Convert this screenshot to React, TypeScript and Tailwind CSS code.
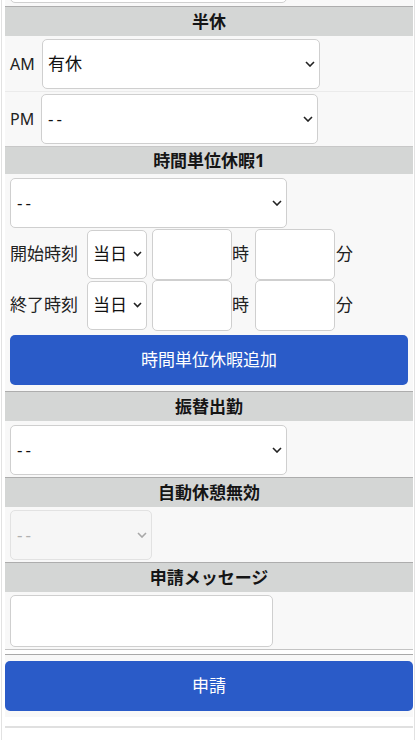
import type { ReactNode } from 'react'

const font = { fontFamily: '"Noto Sans", "Noto Sans CJK JP", sans-serif' }

function Chevron({ muted = false, small = false }: { muted?: boolean; small?: boolean }) {
  return (
    <svg
      className="pointer-events-none absolute right-[5px] top-1/2 -translate-y-1/2"
      width={small ? 9 : 10}
      height={6}
      viewBox={small ? '0 0 9 6' : '0 0 10 6'}
      fill="none"
    >
      <path
        d={small ? 'M1 1l3.5 3.5L8 1' : 'M1 1l4 4 4-4'}
        stroke={muted ? '#a8a8a8' : '#222'}
        strokeWidth="1.6"
      />
    </svg>
  )
}

function Select({
  value,
  className,
  disabled = false,
  small = false,
}: {
  value: string
  className: string
  disabled?: boolean
  small?: boolean
}) {
  return (
    <div className={`relative shrink-0 ${className}`}>
      <select
        disabled={disabled}
        defaultValue={value}
        className={`h-full w-full appearance-none rounded-[5px] border text-[17px] outline-none ${
          value === '--' ? 'pl-[6px] tracking-[3px]' : 'pl-[5px]'
        } ${disabled ? 'border-[#e2e2e2] bg-[#f6f6f6] text-[#b0b0b0]' : 'border-[#cfcfcf] bg-white text-[#111]'}`}
        style={font}
      >
        <option value={value}>{value}</option>
      </select>
      <Chevron muted={disabled} small={small} />
    </div>
  )
}

function Header({ children, light = false }: { children: ReactNode; light?: boolean }) {
  return (
    <div
      className={`flex items-center justify-center border-t bg-[#d4d6d5] text-[17px] font-bold text-[#151515] ${
        light ? 'h-[28px] border-[#c8c8c8]' : 'h-[30px] border-[#adadad]'
      }`}
    >
      {children}
    </div>
  )
}

function TimeRow({ label }: { label: string }) {
  return (
    <div className="flex h-[50px] items-center pl-[5px] text-[17px] text-[#222]">
      <span className="w-[77px] shrink-0">{label}</span>
      <Select value="当日" className="h-[49px] w-[60px]" small />
      <input className="ml-[5px] h-[51px] w-[80px] rounded-[5px] border border-[#cfcfcf] bg-white outline-none" />
      <span className="w-[23px] shrink-0">時</span>
      <input className="h-[51px] w-[80px] rounded-[5px] border border-[#cfcfcf] bg-white outline-none" />
      <span className="pl-px">分</span>
    </div>
  )
}

export default function App() {
  return (
    <div className="min-h-[740px] bg-white pl-px pr-[3px]" style={font}>
      <div className="min-h-[740px] border-x border-[#e2e2e2] pl-[3px] pr-px">
        {/* tail of the previous section */}
        <div className="h-[6px] overflow-hidden bg-[#f8f8f8] pl-[5px]">
          <div className="-mt-[47px] h-[50px] w-[277px] rounded-[5px] border border-[#cfcfcf] bg-white" />
        </div>

        <Header>半休</Header>
        <div className="flex items-center border-b border-[#ebebeb] bg-[#f8f8f8] pb-[2px] pl-[5px] pt-[3px]">
          <span className="w-[32px] shrink-0 text-[16px] text-[#222]">AM</span>
          <Select value="有休" className="h-[50px] w-[278px]" />
        </div>
        <div className="flex items-center bg-[#f8f8f8] py-[2px] pl-[5px]">
          <span className="w-[31px] shrink-0 text-[16px] text-[#222]">PM</span>
          <Select value="--" className="h-[50px] w-[277px]" />
        </div>

        <Header light>時間単位休暇1</Header>
        <div className="bg-[#f8f8f8] pb-[6px]">
          <div className="pl-[5px] pt-[4px]">
            <Select value="--" className="h-[50px] w-[277px]" />
          </div>
          <div className="mt-px">
            <TimeRow label="開始時刻" />
          </div>
          <div className="mt-px">
            <TimeRow label="終了時刻" />
          </div>
          <div className="mt-[5px] px-[5px]">
            <button className="h-[50px] w-full rounded-[5px] bg-[#2a5bc8] text-[17px] text-white">
              時間単位休暇追加
            </button>
          </div>
        </div>

        <Header>振替出勤</Header>
        <div className="bg-[#f8f8f8] pb-[2px] pl-[5px] pt-[4px]">
          <Select value="--" className="h-[50px] w-[277px]" />
        </div>

        <Header>自動休憩無効</Header>
        <div className="bg-[#f8f8f8] pb-[2px] pl-[5px] pt-[3px]">
          <Select value="--" className="h-[50px] w-[142px]" disabled />
        </div>

        <Header>申請メッセージ</Header>
        <div className="bg-[#f8f8f8] pb-[2px] pl-[5px] pt-[3px]">
          <textarea className="block h-[52px] w-[263px] resize-none rounded-[5px] border border-[#cfcfcf] bg-white outline-none" />
        </div>

        <div className="h-[5px] border-t border-[#c4c4c4] bg-white" />
        <div className="border-t border-[#a9a9a9] bg-[#f8f8f8] pb-[6px] pt-[6px]">
          <button className="h-[50px] w-full rounded-[5px] bg-[#2a5bc8] text-[17px] text-white">申請</button>
        </div>
        <div className="h-[9px]" />
        <div className="h-[2px] bg-[#e0e0e0]" />
      </div>
    </div>
  )
}
